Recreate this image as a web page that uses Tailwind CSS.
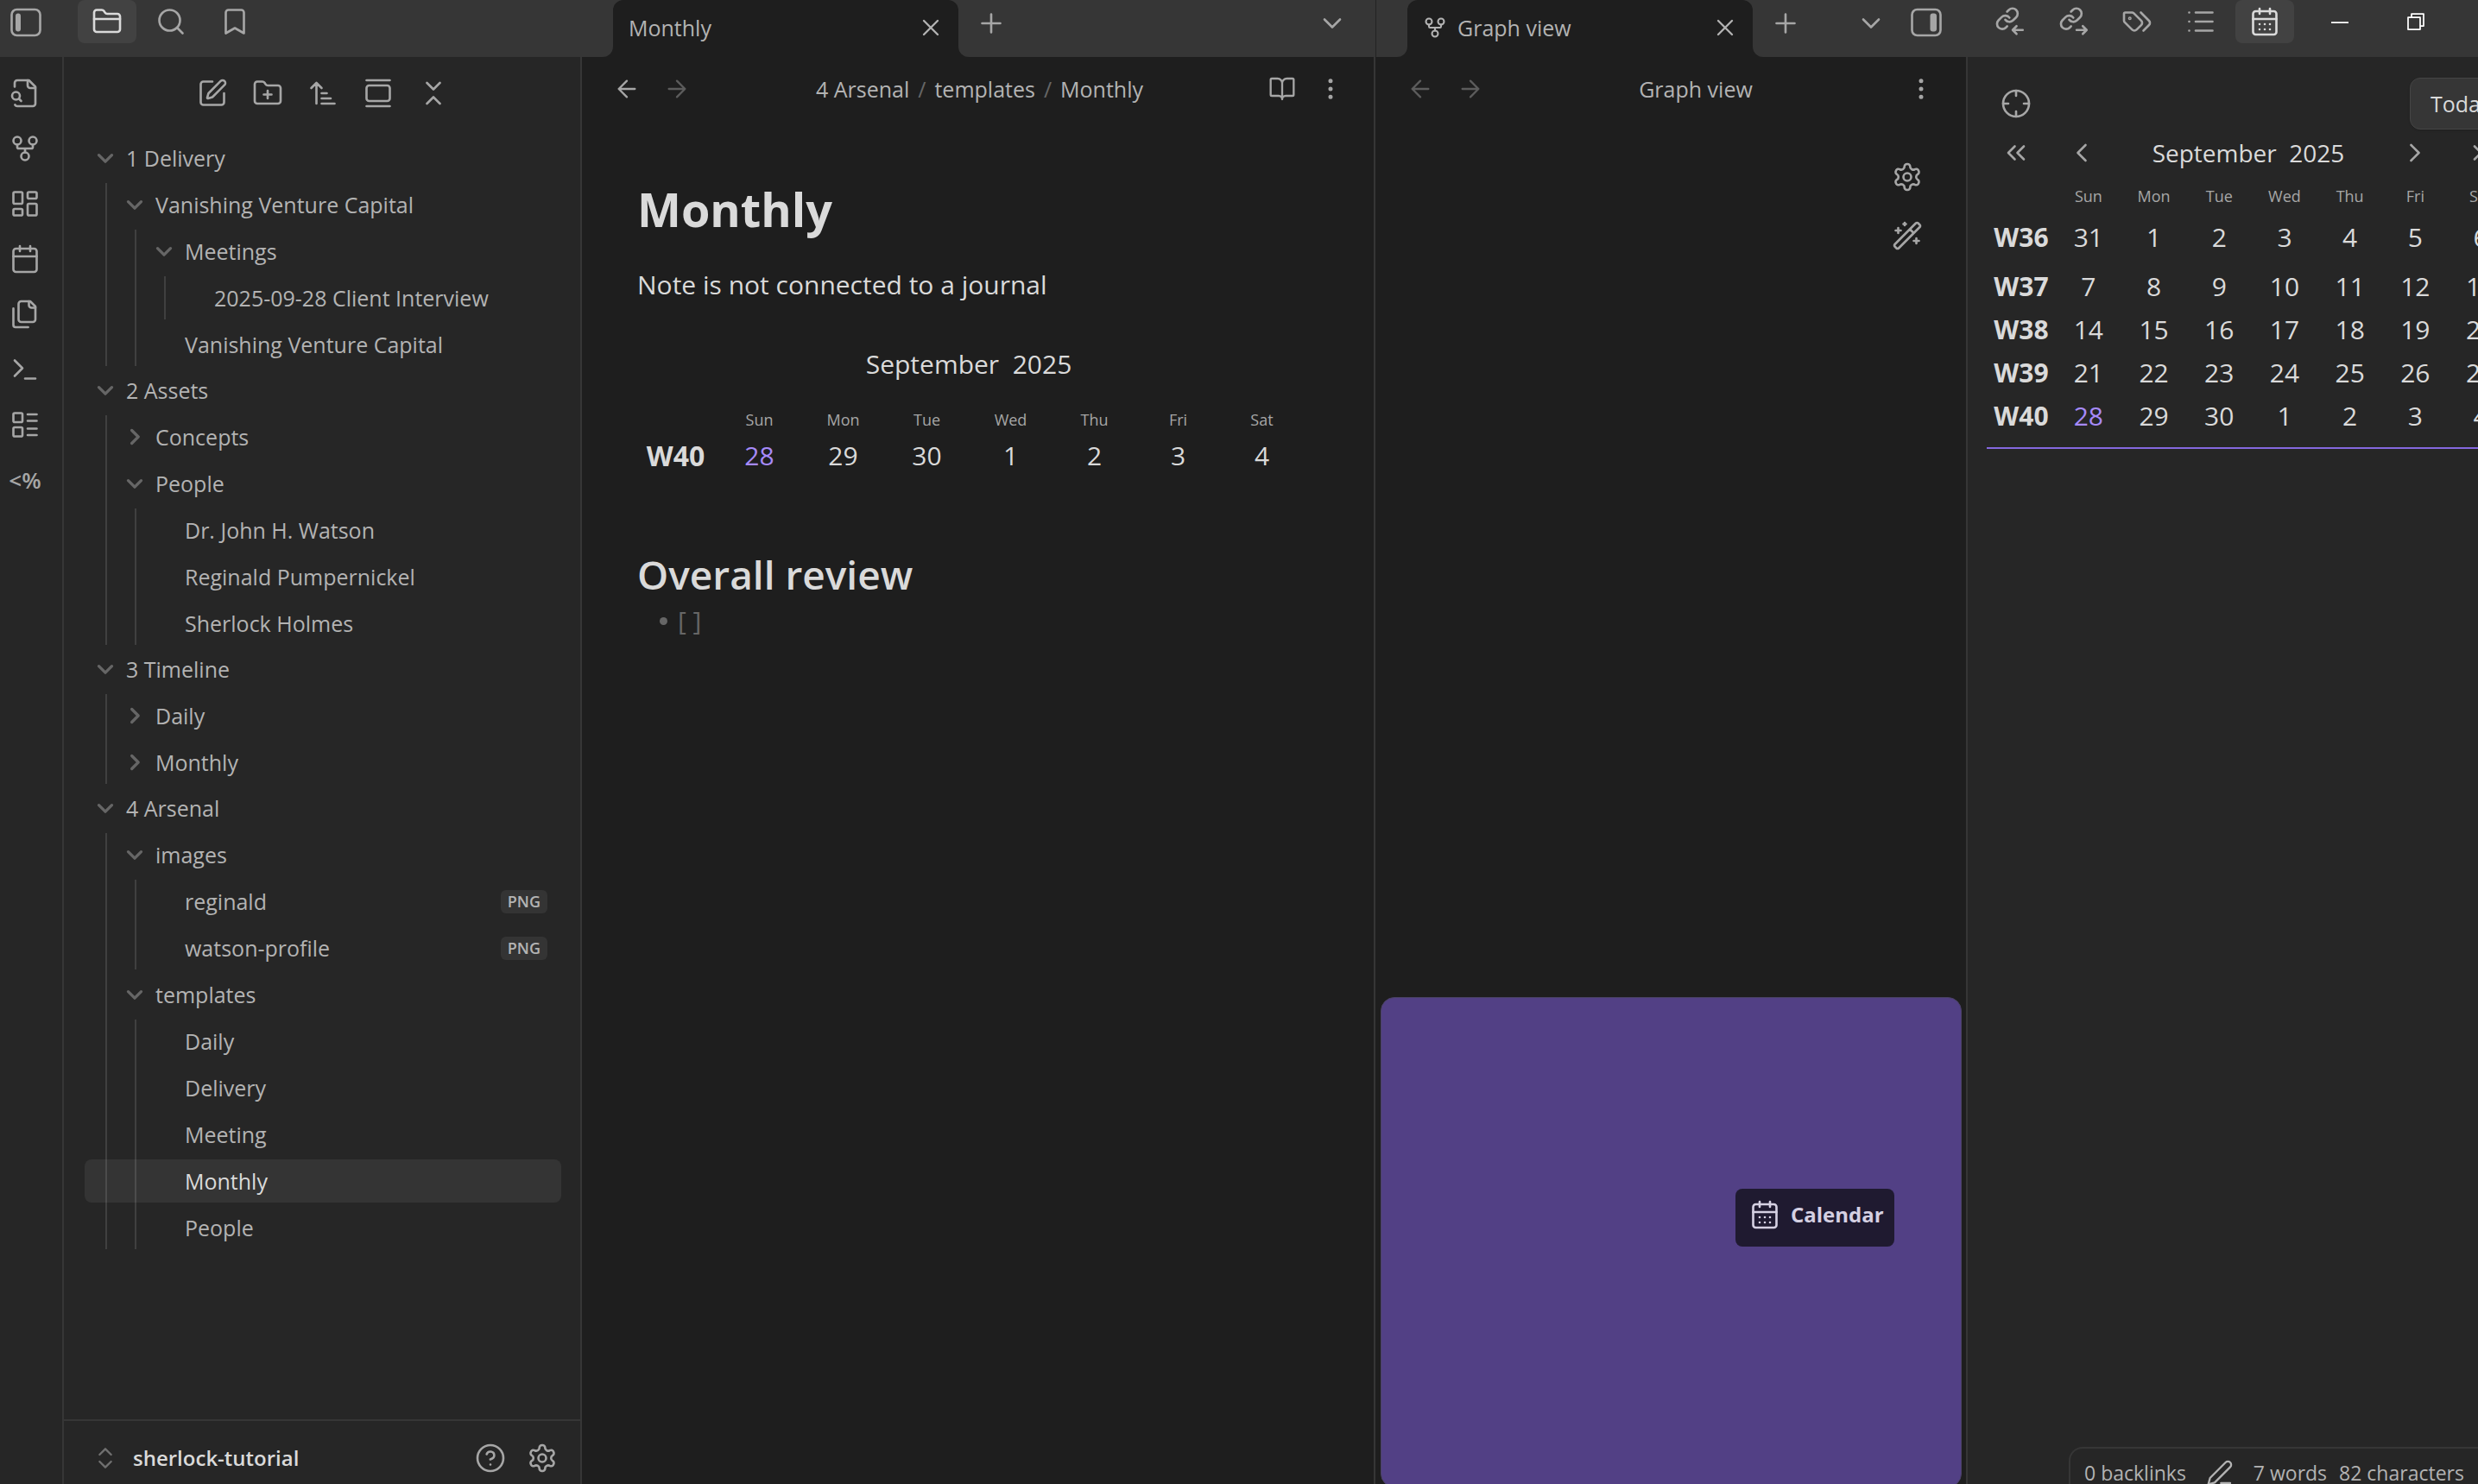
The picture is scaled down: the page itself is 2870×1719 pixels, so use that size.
<!DOCTYPE html>
<html lang="en">
<head>
<meta charset="utf-8">
<title>Monthly - sherlock-tutorial</title>
<script src="https://cdn.jsdelivr.net/npm/@tailwindcss/browser@4"></script>
</head>
<body class="h-screen overflow-hidden bg-[#1e1e1e] font-['Open_Sans',sans-serif] text-[25px] leading-[34px] text-[#b3b3b3]">

<svg class="hidden" xmlns="http://www.w3.org/2000/svg">
  <symbol id="panel-left" viewBox="0 0 24 24"><rect x="1" y="2" width="22" height="20" rx="4"/><rect x="4" y="5" width="4" height="14" rx="2" fill="currentColor" stroke="none"/></symbol>
  <symbol id="panel-right" viewBox="0 0 24 24"><rect x="1" y="2" width="22" height="20" rx="4"/><rect x="15" y="5" width="5" height="14" rx="2" fill="currentColor" stroke="none"/></symbol>
  <symbol id="folder" viewBox="0 0 24 24"><path d="M20 20a2 2 0 0 0 2-2V8a2 2 0 0 0-2-2h-7.900a2 2 0 0 1-1.690-.9L9.600 3.900A2 2 0 0 0 7.930 3H4a2 2 0 0 0-2 2v13a2 2 0 0 0 2 2Z"/><path d="M2 10h20"/></symbol>
  <symbol id="folder-plus" viewBox="0 0 24 24"><path d="M20 20a2 2 0 0 0 2-2V8a2 2 0 0 0-2-2h-7.900a2 2 0 0 1-1.690-.9L9.600 3.900A2 2 0 0 0 7.930 3H4a2 2 0 0 0-2 2v13a2 2 0 0 0 2 2Z"/><path d="M12 10v6M9 13h6"/></symbol>
  <symbol id="search" viewBox="0 0 24 24"><circle cx="11" cy="11" r="8"/><path d="m21 21-4.300-4.300"/></symbol>
  <symbol id="bookmark" viewBox="0 0 24 24"><path d="m19 21-7-4-7 4V5a2 2 0 0 1 2-2h10a2 2 0 0 1 2 2z"/></symbol>
  <symbol id="file-search" viewBox="0 0 24 24"><path d="M14 2v4a2 2 0 0 0 2 2h4"/><path d="M4.268 21a2 2 0 0 0 1.727 1H18a2 2 0 0 0 2-2V7l-5-5H6a2 2 0 0 0-2 2v3"/><path d="m9 18-1.500-1.500"/><circle cx="5" cy="14" r="3"/></symbol>
  <symbol id="fork" viewBox="0 0 24 24"><circle cx="12" cy="18" r="3"/><circle cx="6" cy="6" r="3"/><circle cx="18" cy="6" r="3"/><path d="M18 9v2c0 .6-.4 1-1 1H7c-.6 0-1-.4-1-1V9M12 12v3"/></symbol>
  <symbol id="dashboard" viewBox="0 0 24 24"><rect width="7" height="9" x="3" y="3" rx="1"/><rect width="7" height="5" x="14" y="3" rx="1"/><rect width="7" height="9" x="14" y="12" rx="1"/><rect width="7" height="5" x="3" y="16" rx="1"/></symbol>
  <symbol id="calendar" viewBox="0 0 24 24"><path d="M8 2v4M16 2v4M3 10h18"/><rect width="18" height="18" x="3" y="4" rx="2"/></symbol>
  <symbol id="calendar-days" viewBox="0 0 24 24"><path d="M8 2v4M16 2v4M3 10h18M8 14h.01M12 14h.01M16 14h.01M8 18h.01M12 18h.01M16 18h.01"/><rect width="18" height="18" x="3" y="4" rx="2"/></symbol>
  <symbol id="files" viewBox="0 0 24 24"><path d="M20 7h-3a2 2 0 0 1-2-2V2"/><path d="M9 18a2 2 0 0 1-2-2V4a2 2 0 0 1 2-2h7l4 4v10a2 2 0 0 1-2 2Z"/><path d="M3 7.600v12.800A1.600 1.600 0 0 0 4.600 22h9.800"/></symbol>
  <symbol id="terminal" viewBox="0 0 24 24"><path d="m4 17 6-6-6-6M12 19h8"/></symbol>
  <symbol id="layout-list" viewBox="0 0 24 24"><rect width="7" height="7" x="3" y="3" rx="1"/><rect width="7" height="7" x="3" y="14" rx="1"/><path d="M14 4h7M14 9h7M14 15h7M14 20h7"/></symbol>
  <symbol id="edit" viewBox="0 0 24 24"><path d="M12 3H5a2 2 0 0 0-2 2v14a2 2 0 0 0 2 2h14a2 2 0 0 0 2-2v-7"/><path d="M18.375 2.625a1 1 0 0 1 3 3l-9.013 9.014a2 2 0 0 1-.853.505l-2.873.84a.5.5 0 0 1-.62-.62l.84-2.873a2 2 0 0 1 .506-.852z"/></symbol>
  <symbol id="sort" viewBox="0 0 24 24"><path d="m3 8 4-4 4 4M7 4v16M11 12h4M11 16h7M11 20h10"/></symbol>
  <symbol id="gallery" viewBox="0 0 24 24"><path d="M3 2h18M3 22h18"/><rect width="18" height="12" x="3" y="6" rx="2"/></symbol>
  <symbol id="collapse" viewBox="0 0 24 24"><path d="m7 20 5-5 5 5M7 4l5 5 5-5"/></symbol>
  <symbol id="up-down" viewBox="0 0 24 24"><path d="m7 15 5 5 5-5M7 9l5-5 5 5"/></symbol>
  <symbol id="x" viewBox="0 0 24 24"><path d="M18 6 6 18M6 6l12 12"/></symbol>
  <symbol id="plus" viewBox="0 0 24 24"><path d="M5 12h14M12 5v14"/></symbol>
  <symbol id="down" viewBox="0 0 24 24"><path d="m6 9 6 6 6-6"/></symbol>
  <symbol id="left" viewBox="0 0 24 24"><path d="m15 18-6-6 6-6"/></symbol>
  <symbol id="right" viewBox="0 0 24 24"><path d="m9 18 6-6-6-6"/></symbol>
  <symbol id="dleft" viewBox="0 0 24 24"><path d="m11 17-5-5 5-5M18 17l-5-5 5-5"/></symbol>
  <symbol id="dright" viewBox="0 0 24 24"><path d="m6 17 5-5-5-5M13 17l5-5-5-5"/></symbol>
  <symbol id="arrow-left" viewBox="0 0 24 24"><path d="m12 19-7-7 7-7M19 12H5"/></symbol>
  <symbol id="arrow-right" viewBox="0 0 24 24"><path d="m12 5 7 7-7 7M5 12h14"/></symbol>
  <symbol id="book" viewBox="0 0 24 24"><path d="M12 7v14M3 18a1 1 0 0 1-1-1V4a1 1 0 0 1 1-1h5a4 4 0 0 1 4 4 4 4 0 0 1 4-4h5a1 1 0 0 1 1 1v13a1 1 0 0 1-1 1h-6a3 3 0 0 0-3 3 3 3 0 0 0-3-3z"/></symbol>
  <symbol id="dots" viewBox="0 0 24 24"><circle cx="12" cy="12" r="1"/><circle cx="12" cy="5" r="1"/><circle cx="12" cy="19" r="1"/></symbol>
  <symbol id="gear" viewBox="0 0 24 24"><path d="M12.220 2h-.44a2 2 0 0 0-2 2v.18a2 2 0 0 1-1 1.730l-.43.25a2 2 0 0 1-2 0l-.15-.08a2 2 0 0 0-2.730.73l-.22.38a2 2 0 0 0 .73 2.730l.15.1a2 2 0 0 1 1 1.720v.51a2 2 0 0 1-1 1.740l-.15.09a2 2 0 0 0-.73 2.730l.22.38a2 2 0 0 0 2.730.73l.15-.08a2 2 0 0 1 2 0l.43.25a2 2 0 0 1 1 1.730V20a2 2 0 0 0 2 2h.44a2 2 0 0 0 2-2v-.18a2 2 0 0 1 1-1.730l.43-.25a2 2 0 0 1 2 0l.15.08a2 2 0 0 0 2.730-.73l.22-.39a2 2 0 0 0-.73-2.730l-.15-.08a2 2 0 0 1-1-1.740v-.5a2 2 0 0 1 1-1.740l.15-.09a2 2 0 0 0 .73-2.730l-.22-.38a2 2 0 0 0-2.730-.73l-.15.08a2 2 0 0 1-2 0l-.43-.25a2 2 0 0 1-1-1.730V4a2 2 0 0 0-2-2z"/><circle cx="12" cy="12" r="3"/></symbol>
  <symbol id="wand" viewBox="0 0 24 24"><path d="m21.640 3.640-1.280-1.280a1.210 1.210 0 0 0-1.720 0L2.360 18.640a1.210 1.210 0 0 0 0 1.720l1.280 1.280a1.200 1.200 0 0 0 1.720 0L21.640 5.360a1.200 1.200 0 0 0 0-1.720M14 7l3 3M5 6v4M19 14v4M10 2v2M7 8H3M21 16h-4M11 3H9"/></symbol>
  <symbol id="tags" viewBox="0 0 24 24"><path d="m15 5 6.300 6.300a2.400 2.400 0 0 1 0 3.400L17 19"/><path d="M9.586 5.586A2 2 0 0 0 8.172 5H3a1 1 0 0 0-1 1v5.172a2 2 0 0 0 .586 1.414L8.290 18.290a2.426 2.426 0 0 0 3.420 0l3.580-3.580a2.426 2.426 0 0 0 0-3.420z"/><circle cx="6.500" cy="9.500" r=".5"/></symbol>
  <symbol id="list" viewBox="0 0 24 24"><path d="M8 5h13M8 12h13M8 19h13M3 5h.01M3 12h.01M3 19h.01"/></symbol>
  <symbol id="link-in" viewBox="0 0 24 24"><g transform="translate(1 .2) scale(.8)" stroke-width="2.200"><path d="M10 13a5 5 0 0 0 7.540.54l3-3a5 5 0 0 0-7.070-7.070l-1.720 1.710"/><path d="M14 11a5 5 0 0 0-7.540-.54l-3 3a5 5 0 0 0 7.070 7.070l1.300-1.300"/></g><path d="M22.500 18.500H15M17.700 15.500l-3 3 3 3"/></symbol>
  <symbol id="link-out" viewBox="0 0 24 24"><g transform="translate(1 .2) scale(.8)" stroke-width="2.200"><path d="M10 13a5 5 0 0 0 7.540.54l3-3a5 5 0 0 0-7.070-7.070l-1.720 1.710"/><path d="M14 11a5 5 0 0 0-7.540-.54l-3 3a5 5 0 0 0 7.070 7.070l1.300-1.300"/></g><path d="M14.700 18.500h7.500M19.500 15.500l3 3-3 3"/></symbol>
  <symbol id="crosshair" viewBox="0 0 24 24"><circle cx="12" cy="12" r="10"/><path d="M22 12h-4M6 12H2M12 6V2M12 22v-4"/></symbol>
  <symbol id="help" viewBox="0 0 24 24"><circle cx="12" cy="12" r="10"/><path d="M9.090 9a3 3 0 0 1 5.830 1c0 2-3 3-3 3M12 17h.01"/></symbol>
  <symbol id="pen" viewBox="0 0 24 24"><path d="M13 21h8M17 3a2.800 2.800 0 0 1 4 4L7.500 20.500 2 22l1.500-5.500z"/></symbol>
  <symbol id="minimize" viewBox="0 0 20 20"><path d="M0 10h20"/></symbol>
  <symbol id="restore" viewBox="0 0 20 20"><path d="M1 5h14v14H1zM5 5V1h14v14h-4"/></symbol>
</svg>

<div class="flex h-full [&_svg]:shrink-0 [&_svg]:fill-none [&_svg]:stroke-current [&_svg]:[stroke-linecap:round] [&_svg]:[stroke-linejoin:round] [&_svg]:[stroke-width:1.75]">

  <!-- Left: ribbon and file explorer -->
  <div class="flex w-[674px] shrink-0 flex-col bg-[#262626]">
    <header class="flex h-[66px] shrink-0 items-start gap-[6px] bg-[#363636] text-[#a6a6a6]">
      <button aria-label="Toggle left sidebar" class="mr-[36px] flex h-[52px] w-12 items-center justify-end"><svg class="size-9"><use href="#panel-left"/></svg></button>
      <button aria-label="Files" class="flex h-[50px] w-[68px] items-center justify-center rounded-lg bg-[#424242] text-[#dadada]"><svg class="size-9"><use href="#folder"/></svg></button>
      <button aria-label="Search" class="flex h-[50px] w-[68px] items-center justify-center"><svg class="size-9"><use href="#search"/></svg></button>
      <button aria-label="Bookmarks" class="flex h-[50px] w-[68px] items-center justify-center"><svg class="size-9"><use href="#bookmark"/></svg></button>
    </header>
    <div class="flex min-h-0 flex-1">
      <nav aria-label="Ribbon" class="flex w-[74px] shrink-0 flex-col items-start gap-7 border-r-2 border-[#363636] pt-6 pl-[11px] text-[#a6a6a6]">
        <button aria-label="Quick switcher"><svg class="size-9"><use href="#file-search"/></svg></button>
        <button aria-label="Graph view"><svg class="size-9"><use href="#fork"/></svg></button>
        <button aria-label="New canvas"><svg class="size-9"><use href="#dashboard"/></svg></button>
        <button aria-label="Daily note"><svg class="size-9"><use href="#calendar"/></svg></button>
        <button aria-label="Insert template"><svg class="size-9"><use href="#files"/></svg></button>
        <button aria-label="Command palette"><svg class="size-9"><use href="#terminal"/></svg></button>
        <button aria-label="New base"><svg class="size-9"><use href="#layout-list"/></svg></button>
        <button aria-label="Templater" class="flex h-9 w-9 items-center justify-center text-[26px] font-semibold">&lt;%</button>
      </nav>
      <div class="flex min-w-0 flex-1 flex-col border-r-2 border-[#363636]">
        <div class="flex justify-center gap-7 pt-6 pl-[2px] text-[#a6a6a6]">
          <button aria-label="New note"><svg class="size-9"><use href="#edit"/></svg></button>
          <button aria-label="New folder"><svg class="size-9"><use href="#folder-plus"/></svg></button>
          <button aria-label="Sort order"><svg class="size-9"><use href="#sort"/></svg></button>
          <button aria-label="Auto-reveal"><svg class="size-9"><use href="#gallery"/></svg></button>
          <button aria-label="Collapse all"><svg class="size-9"><use href="#collapse"/></svg></button>
        </div>
        <ul id="tree" class="mt-8 flex min-h-0 flex-1 flex-col gap-[3px] pr-[22px] pl-6"></ul>
        <footer class="flex h-[75px] items-center border-t-2 border-[#363636] pt-3 pr-[26px] pl-8 text-[#a6a6a6]">
          <button class="flex flex-1 items-center gap-4 text-[24px] font-semibold text-[#dadada]"><svg class="size-8 text-[#707070]"><use href="#up-down"/></svg>sherlock-tutorial</button>
          <button aria-label="Help" class="mr-6"><svg class="size-9"><use href="#help"/></svg></button>
          <button aria-label="Settings"><svg class="size-9"><use href="#gear"/></svg></button>
        </footer>
      </div>
    </div>
  </div>

  <!-- Note pane -->
  <main class="flex min-w-0 flex-[919] flex-col">
    <header class="flex h-[66px] shrink-0 bg-[#363636] pl-9 text-[#a6a6a6]">
      <div class="relative flex w-[400px] items-center justify-between rounded-t-xl bg-[#1e1e1e] pr-4 pb-[2px] pl-[18px] text-[#b3b3b3] before:absolute before:bottom-0 before:-left-3 before:size-3 before:rounded-br-xl before:shadow-[4px_4px_0_4px_#1e1e1e] before:[clip-path:inset(0)] after:absolute after:-right-3 after:bottom-0 after:size-3 after:rounded-bl-xl after:shadow-[-4px_4px_0_4px_#1e1e1e] after:[clip-path:inset(0)]">
        <span>Monthly</span>
        <button aria-label="Close tab"><svg class="size-8"><use href="#x"/></svg></button>
      </div>
      <button aria-label="New tab" class="ml-5 h-[54px]"><svg class="size-9"><use href="#plus"/></svg></button>
      <button aria-label="Tab list" class="mr-8 ml-auto h-[54px]"><svg class="size-9"><use href="#down"/></svg></button>
    </header>
    <div class="flex min-h-0 flex-1 flex-col border-r-2 border-[#363636]">
      <div class="flex h-[74px] shrink-0 items-center justify-between pr-[34px] pl-9 text-[#a6a6a6]">
        <div class="flex w-[90px] justify-between">
          <button aria-label="Back"><svg class="size-8"><use href="#arrow-left"/></svg></button>
          <button aria-label="Forward" class="text-[#5c5c5c]"><svg class="size-8"><use href="#arrow-right"/></svg></button>
        </div>
        <nav aria-label="Breadcrumb" class="flex gap-[10px] text-[#b3b3b3]"><a href="#">4 Arsenal</a><span class="text-[#666]">/</span><a href="#">templates</a><span class="text-[#666]">/</span><span>Monthly</span></nav>
        <div class="flex w-[88px] justify-between">
          <button aria-label="Reading view"><svg class="size-8"><use href="#book"/></svg></button>
          <button aria-label="More options"><svg class="size-8"><use href="#dots"/></svg></button>
        </div>
      </div>
      <article class="px-[60px] pt-[62px] text-[30px] leading-[48px] text-[#dadada]">
        <h1 class="pl-1 text-[54px] leading-[80px] font-bold">Monthly</h1>
        <p class="mt-6 pl-1">Note is not connected to a journal</p>
        <p class="mt-[44px] w-[776px] text-center whitespace-pre">September  2025</p>
        <table class="mt-6 w-[776px] table-fixed text-center">
          <thead class="text-[18px] leading-[32px] text-[#a6a6a6]"><tr><td></td><th class="font-normal">Sun</th><th class="font-normal">Mon</th><th class="font-normal">Tue</th><th class="font-normal">Wed</th><th class="font-normal">Thu</th><th class="font-normal">Fri</th><th class="font-normal">Sat</th></tr></thead>
          <tbody><tr class="h-[52px]"><th class="text-[32px] font-bold">W40</th><td class="text-[#a68af9]">28</td><td>29</td><td>30</td><td>1</td><td>2</td><td>3</td><td>4</td></tr></tbody>
        </table>
        <h2 class="mt-[79px] pl-1 text-[46px] leading-[64px] font-semibold">Overall review</h2>
        <ul class="mt-[2px] pl-[30px] text-[#666]"><li class="flex items-center gap-3 leading-[40px]"><span class="size-[9px] rounded-full bg-[#666]"></span>[ ]</li></ul>
      </article>
    </div>
  </main>

  <!-- Graph pane -->
  <section class="flex min-w-0 flex-[686] flex-col">
    <header class="flex h-[66px] shrink-0 border-l border-[#242424] bg-[#363636] pl-9 text-[#a6a6a6]">
      <div class="relative flex w-[400px] items-center rounded-t-xl bg-[#1e1e1e] pr-4 pb-[2px] pl-[18px] text-[#b3b3b3] before:absolute before:bottom-0 before:-left-3 before:size-3 before:rounded-br-xl before:shadow-[4px_4px_0_4px_#1e1e1e] before:[clip-path:inset(0)] after:absolute after:-right-3 after:bottom-0 after:size-3 after:rounded-bl-xl after:shadow-[-4px_4px_0_4px_#1e1e1e] after:[clip-path:inset(0)]">
        <svg class="mr-3 size-7"><use href="#fork"/></svg>
        <span>Graph view</span>
        <button aria-label="Close tab" class="ml-auto"><svg class="size-8"><use href="#x"/></svg></button>
      </div>
      <button aria-label="New tab" class="ml-5 h-[54px]"><svg class="size-9"><use href="#plus"/></svg></button>
      <button aria-label="Tab list" class="mr-7 ml-auto h-[54px]"><svg class="size-9"><use href="#down"/></svg></button>
      <button aria-label="Toggle right sidebar" class="mr-[30px] h-[52px]"><svg class="size-9"><use href="#panel-right"/></svg></button>
    </header>
    <div class="flex min-h-0 flex-1 flex-col border-r-2 border-[#363636]">
      <div class="flex h-[74px] shrink-0 items-center justify-between px-9 text-[#a6a6a6]">
        <div class="flex w-[90px] justify-between text-[#5c5c5c]">
          <button aria-label="Back"><svg class="size-8"><use href="#arrow-left"/></svg></button>
          <button aria-label="Forward"><svg class="size-8"><use href="#arrow-right"/></svg></button>
        </div>
        <span class="text-[#b3b3b3]">Graph view</span>
        <button aria-label="More options"><svg class="size-8"><use href="#dots"/></svg></button>
      </div>
      <div class="flex flex-1 flex-col items-end gap-8 pt-[47px] pr-[50px] text-[#a6a6a6]">
        <button aria-label="Graph settings"><svg class="size-9"><use href="#gear"/></svg></button>
        <button aria-label="Animate"><svg class="size-9"><use href="#wand"/></svg></button>
      </div>
      <div class="relative mr-[5px] -mb-1 ml-[6px] h-[568px] rounded-2xl border border-[#4b4266] bg-[#524085]">
        <div class="absolute top-[221px] right-[77px] flex h-[67px] w-[184px] items-center gap-3 rounded-lg bg-[#1f1a30] pb-2 pl-4 text-[24px] font-bold text-[#d5d0e2]"><svg class="size-9"><use href="#calendar-days"/></svg>Calendar</div>
      </div>
    </div>
  </section>

  <!-- Right: calendar -->
  <aside class="relative flex w-[591px] shrink-0 flex-col overflow-hidden bg-[#262626]">
    <header class="flex h-[66px] shrink-0 items-start gap-[6px] bg-[#363636] pl-[14px] text-[#a6a6a6]">
      <button aria-label="Backlinks" class="flex h-[50px] w-[68px] items-center justify-center"><svg class="size-9"><use href="#link-in"/></svg></button>
      <button aria-label="Outgoing links" class="flex h-[50px] w-[68px] items-center justify-center"><svg class="size-9"><use href="#link-out"/></svg></button>
      <button aria-label="Tags" class="flex h-[50px] w-[68px] items-center justify-center"><svg class="size-9"><use href="#tags"/></svg></button>
      <button aria-label="Outline" class="flex h-[50px] w-[68px] items-center justify-center"><svg class="size-9"><use href="#list"/></svg></button>
      <button aria-label="Calendar" class="flex h-[50px] w-[68px] items-center justify-center rounded-lg bg-[#424242] text-[#dadada]"><svg class="size-9"><use href="#calendar-days"/></svg></button>
      <button aria-label="Minimize" class="ml-[37px] flex h-[52px] items-center text-white"><svg class="size-5"><use href="#minimize"/></svg></button>
      <button aria-label="Restore" class="ml-[62px] flex h-[50px] items-center text-white"><svg class="size-5"><use href="#restore"/></svg></button>
    </header>
    <div class="ml-[22px] w-[610px] border-b-2 border-[#8468df] pt-6 pb-[11px] text-[30px] leading-[50px] text-[#dadada]">
      <div class="flex h-[60px] items-center justify-between pl-4 text-[#a6a6a6]">
        <button aria-label="Reveal current date"><svg class="size-9"><use href="#crosshair"/></svg></button>
        <button class="h-[60px] w-[120px] rounded-xl border border-[#454545] bg-[#363636] pl-[23px] text-left text-[25px] text-[#dadada] shadow">Today</button>
      </div>
      <div class="flex h-[54px] items-center pr-[18px] pl-4 text-[#a6a6a6]">
        <button aria-label="Previous year"><svg class="size-9"><use href="#dleft"/></svg></button>
        <button aria-label="Previous month" class="ml-10"><svg class="size-9"><use href="#left"/></svg></button>
        <span class="flex-1 text-center text-[28px] whitespace-pre text-[#dadada]">September  2025</span>
        <button aria-label="Next month" class="mr-[42px]"><svg class="size-9"><use href="#right"/></svg></button>
        <button aria-label="Next year"><svg class="size-9"><use href="#dright"/></svg></button>
      </div>
      <table class="w-full table-fixed text-center">
        <colgroup><col class="w-20"><col><col><col><col><col><col><col></colgroup>
        <thead class="text-[18px] leading-[32px] text-[#a6a6a6] [&_th]:pt-[7px]"><tr><td></td><th class="font-normal">Sun</th><th class="font-normal">Mon</th><th class="font-normal">Tue</th><th class="font-normal">Wed</th><th class="font-normal">Thu</th><th class="font-normal">Fri</th><th class="font-normal">Sat</th></tr></thead>
        <tbody>
          <tr class="h-[64px]"><th class="font-bold">W36</th><td>31</td><td>1</td><td>2</td><td>3</td><td>4</td><td>5</td><td>6</td></tr>
          <tr><th class="font-bold">W37</th><td>7</td><td>8</td><td>9</td><td>10</td><td>11</td><td>12</td><td>13</td></tr>
          <tr><th class="font-bold">W38</th><td>14</td><td>15</td><td>16</td><td>17</td><td>18</td><td>19</td><td>20</td></tr>
          <tr><th class="font-bold">W39</th><td>21</td><td>22</td><td>23</td><td>24</td><td>25</td><td>26</td><td>27</td></tr>
          <tr><th class="font-bold">W40</th><td class="text-[#a68af9]">28</td><td>29</td><td>30</td><td>1</td><td>2</td><td>3</td><td>4</td></tr>
        </tbody>
      </table>
    </div>
    <footer class="absolute right-0 bottom-0 flex h-[43px] w-[474px] items-center rounded-tl-2xl border-t-2 border-l-2 border-[#363636] pt-[14px] pl-4 text-[23px] whitespace-nowrap">
      <span>0 backlinks</span><svg class="mx-[23px] size-8"><use href="#pen"/></svg><span>7 words</span><span class="ml-[14px]">82 characters</span>
    </footer>
  </aside>
</div>

<script>
  const tree = [
    ['1 Delivery', [['Vanishing Venture Capital', [['Meetings', [['2025-09-28 Client Interview']]], ['Vanishing Venture Capital']]]]],
    ['2 Assets', [['Concepts', []], ['People', [['Dr. John H. Watson'], ['Reginald Pumpernickel'], ['Sherlock Holmes']]]]],
    ['3 Timeline', [['Daily', []], ['Monthly', []]]],
    ['4 Arsenal', [
      ['images', [['reginald', null, 'PNG'], ['watson-profile', null, 'PNG']]],
      ['templates', [['Daily'], ['Delivery'], ['Meeting'], ['Monthly', null, null, true], ['People']]],
    ]],
  ];
  const indent = ['pl-[14px]', 'pl-12', 'pl-[82px]', 'pl-[116px]'];
  const guide = ['before:left-6', 'before:left-[58px]', 'before:left-[92px]'];
  const row = ([name, kids, tag, active], depth) => `<li>
    <a href="#" class="flex h-[50px] items-center rounded-lg pr-4 ${indent[depth]} ${active ? 'bg-[#343434] text-[#dadada]' : ''}">
      <svg class="mr-[14px] size-5 text-[#666] ${kids ? '' : 'invisible'}" viewBox="0 0 24 24"><path style="stroke-width:4" d="${kids && !kids.length ? 'M8 3l9 9-9 9' : 'M3 8l9 9 9-9'}"/></svg>
      <span class="flex-1">${name}</span>
      ${tag ? `<span class="rounded-md bg-[#343434] px-2 text-[18px] leading-[27px] font-semibold">${tag}</span>` : ''}
    </a>
    ${kids && kids.length ? `<ul class="relative mt-1 flex flex-col gap-1 before:absolute before:top-0 before:bottom-0 before:z-10 before:w-[2px] before:bg-white/12 ${guide[depth]}">${kids.map(k => row(k, depth + 1)).join('')}</ul>` : ''}
  </li>`;
  document.getElementById('tree').innerHTML = tree.map(n => row(n, 0)).join('');
</script>
</body>
</html>
